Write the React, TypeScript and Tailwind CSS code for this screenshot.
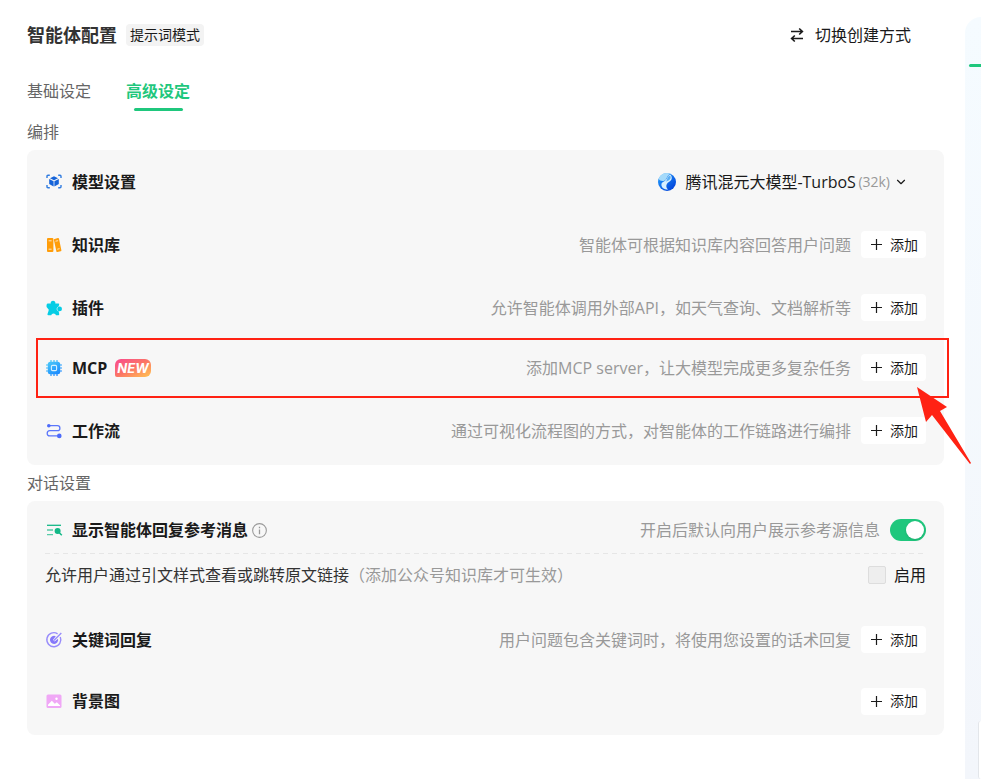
import { useState } from "react";
import type { ReactNode } from "react";
import { ChevronDown } from "lucide-react";

function ModelIcon() {
  return (
    <svg width="18" height="18" viewBox="0 0 18 18" fill="none">
      <path
        d="M2 5V3.2Q2 2.2 3 2.2H4.8M13.2 2.2H15Q16 2.2 16 3.2V5M16 12V13.8Q16 14.8 15 14.8H13.2M4.8 14.8H3Q2 14.8 2 13.8V12"
        stroke="#2f7be0"
        strokeWidth="1.4"
      />
      <path d="M9 3.2L13 5.2L9 7.3L5 5.2Z" fill="#1664d9" />
      <path d="M4.2 6.1L8.6 8.2V13.4L4.2 11.1Z" fill="#1664d9" />
      <path d="M13.8 6.1L9.4 8.2V13.4L13.8 11.1Z" fill="#1664d9" />
    </svg>
  );
}

function BooksIcon() {
  return (
    <svg width="18" height="18" viewBox="0 0 18 18" fill="none">
      <rect x="2" y="2" width="6.4" height="14" rx="1" fill="#ff9d0a" />
      <path
        d="M9.6 2.9L12.9 2.1Q13.8 1.9 14 2.7L16.4 14.3Q16.5 15.1 15.7 15.3L12.4 16Q11.6 16.2 11.4 15.4L8.9 3.9Q8.8 3.1 9.6 2.9Z"
        fill="#ff9d0a"
      />
      <path d="M3.6 4.8H6.6M3.6 13.2H6.6M10.5 5.2L13.1 4.7M12.3 13.2L14.6 12.7" stroke="#fff" strokeOpacity="0.8" strokeWidth="0.9" />
    </svg>
  );
}

function PluginIcon() {
  return (
    <svg width="18" height="18" viewBox="0 0 18 18">
      <path
        d="M2.8 4.5H5.8C4.8 0.8 11.3 0.8 10.3 4.5H13.3Q14.4 4.5 14.2 5.5L13.6 7.6Q11.6 8 11.6 10T13.7 12.2L14.2 15Q14.4 16.2 13.3 16.2H11Q10.6 14.4 8.6 14.4T6.2 16.2H3.4Q2.2 16.2 2.5 15L3.6 11.8Q4.2 10.2 2.8 9.4L1.6 8Q1.2 4.5 2.8 4.5Z"
        fill="#06cde5"
      />
      <circle cx="14.6" cy="9.9" r="2.4" fill="#06cde5" />
    </svg>
  );
}

function ChipIcon() {
  return (
    <svg width="18" height="18" viewBox="0 0 18 18" fill="none">
      <defs>
        <linearGradient id="chip" x1="3" y1="1" x2="13" y2="17" gradientUnits="userSpaceOnUse">
          <stop stopColor="#4fd0f8" />
          <stop offset="1" stopColor="#1683ff" />
        </linearGradient>
      </defs>
      <path
        d="M6 1V4M9 1V4M12 1V4M6 14V17M9 14V17M12 14V17M1 6H4M1 9H4M1 12H4M14 6H17M14 9H17M14 12H17"
        stroke="url(#chip)"
        strokeWidth="1.2"
      />
      <rect x="2.8" y="2.8" width="12.4" height="12.4" rx="2.5" fill="url(#chip)" />
      <rect x="6.4" y="6.4" width="5.2" height="5.2" rx="1.2" stroke="#d8f1ff" strokeWidth="1.1" />
    </svg>
  );
}

function FlowIcon() {
  return (
    <svg width="18" height="18" viewBox="0 0 18 18" fill="none">
      <path
        d="M4 3.7H12.5Q14.9 3.7 14.9 6.2T12.5 8.7H4.8Q2.2 8.7 2.2 11.3T4.8 13.9H13"
        stroke="#5b76fb"
        strokeWidth="1.3"
      />
      <circle cx="3.8" cy="3.7" r="1.8" fill="#4d6bfa" />
      <circle cx="14.3" cy="13.9" r="2.3" fill="#4d6bfa" />
    </svg>
  );
}

function ReferenceIcon() {
  return (
    <svg width="18" height="18" viewBox="0 0 18 18" fill="none">
      <path d="M2 4.3H16" stroke="#12b886" strokeWidth="1.3" />
      <path d="M2 9H8M2 13.7H8" stroke="#12b886" strokeOpacity="0.7" strokeWidth="1.3" />
      <circle cx="12.6" cy="10" r="3" fill="#12b886" />
      <path d="M14 11.5L16.8 14.2" stroke="#12b886" strokeWidth="1.5" />
    </svg>
  );
}

function TargetIcon() {
  return (
    <svg width="18" height="18" viewBox="0 0 18 18" fill="none">
      <path d="M12.6 2.8A7 7 0 1 0 15.3 6" stroke="#988cfb" strokeWidth="1.4" />
      <path d="M10.8 5.2A4.1 4.1 0 1 0 13 7.8L9.6 10.4L8 8.8Z" fill="#8577fa" />
      <path d="M8.8 9.4L16.3 1.9" stroke="#988cfb" strokeWidth="1.4" />
    </svg>
  );
}

function ImageIcon() {
  return (
    <svg width="18" height="18" viewBox="0 0 18 18">
      <rect x="1.5" y="2.5" width="15" height="13.5" rx="1.5" fill="#f0a8f6" />
      <path d="M3 14V12.7L6.8 8.8L9.8 11.8L11.8 10.3L15 13.2V14Z" fill="#fff" />
      <circle cx="11.5" cy="6.8" r="1.2" fill="#fff" />
    </svg>
  );
}

function SwapIcon() {
  return (
    <svg width="14" height="16" viewBox="0 0 14 16" fill="none" stroke="#1a1a1a" strokeWidth="1.6">
      <path d="M1 4.5H12.5M9.2 1.5L12.4 4.5L9.2 7.5" />
      <path d="M13 11.5H1.5M4.8 8.5L1.6 11.5L4.8 14.5" />
    </svg>
  );
}

function HunyuanLogo() {
  return (
    <svg width="20" height="20" viewBox="0 0 20 20">
      <defs>
        <linearGradient id="hy" x1="3" y1="6" x2="14" y2="18" gradientUnits="userSpaceOnUse">
          <stop stopColor="#1e90f8" />
          <stop offset="1" stopColor="#0448dc" />
        </linearGradient>
      </defs>
      <circle cx="10" cy="10" r="9" fill="url(#hy)" />
      <path d="M10 1A9 9 0 0 0 1.6 6.8C3 9.6 7.6 9.8 9.2 7C10.2 5 10.8 2.8 13.6 1.8A9 9 0 0 0 10 1Z" fill="#a5dafa" />
      <path
        d="M13.4 2.4C15.4 4.6 15.2 7.4 13.2 9C11.4 10.4 9.8 11.2 9.4 13.2C9.1 15 9.8 16.4 11.2 17.6C7.4 17.8 4.2 15.4 4.4 12.4C4.6 9.8 8.2 9.6 9.6 7C10.6 5 11 3.2 13.4 2.4Z"
        fill="#d9f0fe"
      />
      <path d="M13.2 3.6C14.2 5.6 13.6 7.4 12 8.2C10.4 9 9.2 9.2 8 10.4C10.2 9 10 6.6 11 5C11.6 4.2 12.2 3.8 13.2 3.6Z" fill="#5aaef3" />
    </svg>
  );
}

function AddButton({ label }: { label: string }) {
  return (
    <button
      aria-label={`添加${label}`}
      className="flex h-[27px] shrink-0 items-center gap-2 rounded bg-white pr-2 pl-2.5 text-sm text-[#1a1a1a]"
    >
      <svg width="11" height="11" viewBox="0 0 11 11" stroke="#1a1a1a" strokeWidth="1.2">
        <path d="M5.5 0V11M0 5.5H11" />
      </svg>
      添加
    </button>
  );
}

interface RowProps {
  icon: ReactNode;
  title: string;
  badge?: ReactNode;
  className?: string;
  children: ReactNode;
}

function Row({ icon, title, badge, className = "h-[63px]", children }: RowProps) {
  return (
    <div className={`flex items-center justify-between px-[18px] ${className}`}>
      <div className="flex items-center">
        {icon}
        <h3 className="ml-[9px] font-bold text-[#1a1a1a]">{title}</h3>
        {badge}
      </div>
      <div className="flex items-center gap-2.5 text-[#999]">{children}</div>
    </div>
  );
}

const tabs = ["基础设定", "高级设定"];

export default function App() {
  const [activeTab, setActiveTab] = useState("高级设定");
  const [showReference, setShowReference] = useState(true);

  return (
    <div className="flex min-h-screen bg-white font-['Open_Sans','Noto_Sans_CJK_SC',sans-serif] text-base leading-6">
      <main className="min-w-0 flex-1 pt-6 pr-[21px] pl-[27px]">
        <header className="flex h-[22px] items-center">
          <h1 className="text-lg font-bold text-[#333]">智能体配置</h1>
          <span className="ml-[9px] rounded bg-[#f3f3f3] px-1 text-sm leading-[22px] text-[#1a1a1a]">提示词模式</span>
          <button className="mr-[33px] ml-auto flex items-center gap-[11px] text-[#1a1a1a]">
            <SwapIcon />
            切换创建方式
          </button>
        </header>

        <nav className="mt-[33px] flex gap-[35px]">
          {tabs.map((tab) => {
            const active = activeTab === tab;
            return (
              <button key={tab} onClick={() => setActiveTab(tab)} className="flex flex-col items-center gap-[5px]">
                <span className={active ? "font-bold text-[#1fc77d]" : "text-[#666]"}>{tab}</span>
                <span className={`h-[3px] w-[49px] rounded-full ${active ? "bg-[#1fc77d]" : ""}`} />
              </button>
            );
          })}
        </nav>

        <h2 className="mt-[9px] text-[#666]">编排</h2>
        <section className="mt-1.5 rounded-lg bg-[#f7f7f7]">
          <Row icon={<ModelIcon />} title="模型设置">
            <div className="mr-[18px] flex items-center">
              <HunyuanLogo />
              <select aria-label="模型" className="ml-2 appearance-none bg-transparent text-[#1a1a1a]">
                <option>腾讯混元大模型-TurboS</option>
              </select>
              <span className="ml-0.5 text-sm">(32k)</span>
              <ChevronDown size={14} className="ml-1 text-[#1a1a1a]" />
            </div>
          </Row>
          <Row icon={<BooksIcon />} title="知识库">
            <p>智能体可根据知识库内容回答用户问题</p>
            <AddButton label="知识库" />
          </Row>
          <Row icon={<PluginIcon />} title="插件">
            <p>允许智能体调用外部API，如天气查询、文档解析等</p>
            <AddButton label="插件" />
          </Row>

          <div className="relative">
            <Row
              icon={<ChipIcon />}
              title="MCP"
              className="h-[57px]"
              badge={
                <span className="ml-2 rounded-md rounded-bl-xs bg-linear-to-br from-[#f9468e] via-[#fb7565] to-[#ffc44d] px-0.5 font-[Inter,sans-serif] text-[13px] leading-[18px] font-bold text-white italic">
                  NEW
                </span>
              }
            >
              <p>添加MCP server，让大模型完成更多复杂任务</p>
              <AddButton label="MCP" />
            </Row>
            <div className="pointer-events-none absolute -top-px -right-[5px] -bottom-0.5 left-[9px] border-2 border-[#ff2213]">
              <svg className="absolute top-[46px] -right-[25px]" width="56" height="80" viewBox="0 0 56 80">
                <path d="M1 1L31 21L24 25L55 77L54 78L16 29L10 36Z" fill="#ff2213" />
              </svg>
            </div>
          </div>

          <Row icon={<FlowIcon />} title="工作流" className="h-[69px]">
            <p>通过可视化流程图的方式，对智能体的工作链路进行编排</p>
            <AddButton label="工作流" />
          </Row>
        </section>

        <h2 className="mt-1.5 text-[#666]">对话设置</h2>
        <section className="mt-1.5 rounded-lg bg-[#f7f7f7] pb-1">
          <Row
            icon={<ReferenceIcon />}
            title="显示智能体回复参考消息"
            className="h-[52px] pt-1.5"
            badge={
              <svg className="ml-1" width="15" height="15" viewBox="0 0 14 14" fill="none" stroke="#999">
                <circle cx="7" cy="7" r="6.4" />
                <path d="M7 6V10.5M7 3.5V4.8" strokeWidth="1.2" />
              </svg>
            }
          >
            <label htmlFor="reference">开启后默认向用户展示参考源信息</label>
            <input
              id="reference"
              type="checkbox"
              role="switch"
              checked={showReference}
              onChange={(e) => setShowReference(e.target.checked)}
              className="flex h-[22px] w-9 appearance-none items-center rounded-full bg-[#ccc] px-0.5 before:size-[18px] before:rounded-full before:bg-white before:shadow checked:justify-end checked:bg-[#1fc77d]"
            />
          </Row>
          <div className="mx-[18px] h-px bg-[repeating-linear-gradient(90deg,#e6e6e6_0_5px,transparent_5px_9px)]" />
          <div className="flex items-center justify-between px-[18px] pt-[9px] pb-[21px] text-[#333]">
            <p>
              允许用户通过引文样式查看或跳转原文链接
              <span className="text-[#999]">（添加公众号知识库才可生效）</span>
            </p>
            <label className="flex items-center gap-2 text-[#1a1a1a]">
              <input type="checkbox" className="size-[18px] appearance-none rounded-xs border border-[#ddd] bg-[#eee]" />
              启用
            </label>
          </div>
          <Row icon={<TargetIcon />} title="关键词回复">
            <p>用户问题包含关键词时，将使用您设置的话术回复</p>
            <AddButton label="关键词回复" />
          </Row>
          <Row icon={<ImageIcon />} title="背景图" className="h-[60px]">
            <AddButton label="背景图" />
          </Row>
        </section>
      </main>

      <aside className="mt-[17px] flex w-4 shrink-0 flex-col items-end justify-between overflow-hidden rounded-tl-2xl bg-linear-to-b from-[#f5fbff] to-[#f3f6fb]">
        <div className="mt-[47px] h-[3px] w-3 rounded-l-full bg-[#1fc77d]" />
        <div className="h-[58px] w-[3px] rounded-l-lg border-l border-[#e3e6ea] bg-white" />
      </aside>
    </div>
  );
}
